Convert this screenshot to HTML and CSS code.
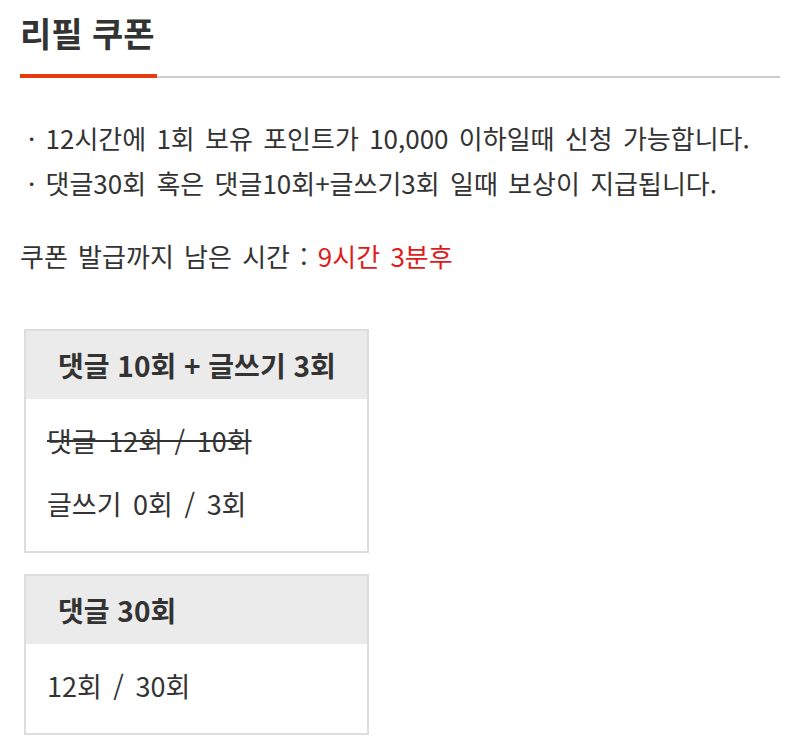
FILE: index.html
```html
<!DOCTYPE html>
<html lang="ko">
<head>
    <meta charset="UTF-8">
    <meta name="viewport" content="width=device-width, initial-scale=1.0">
    <title>리필 쿠폰</title>
    <link rel="stylesheet" href="styles.css">
</head>
<body>
    <div class="page">
        <div class="title-bar">
            <h2 class="title">리필 쿠폰</h2>
        </div>

        <ul class="notice">
            <li>· 12시간에 1회 보유 포인트가 10,000 이하일때 신청 가능합니다.</li>
            <li>· 댓글30회 혹은 댓글10회+글쓰기3회 일때 보상이 지급됩니다.</li>
        </ul>

        <p class="remain">쿠폰 발급까지 남은 시간 : <span class="time">9시간 3분후</span></p>

        <div class="mission">
            <div class="mission-head">댓글 10회 + 글쓰기 3회</div>
            <div class="mission-body">
                <p class="done">댓글 12회 / 10회</p>
                <p>글쓰기 0회 / 3회</p>
            </div>
        </div>

        <div class="mission">
            <div class="mission-head">댓글 30회</div>
            <div class="mission-body">
                <p>12회 / 30회</p>
            </div>
        </div>
    </div>
</body>
</html>
```

FILE: styles.css
```css
body {
    margin: 0;
    padding: 0;
    background: #fff;
    font-family: "Noto Sans CJK KR", "Noto Sans", sans-serif;
    color: #333;
}
.page {
    padding: 0 20px;
}
.title-bar {
    border-bottom: 2px solid #ccc;
}
.title {
    display: inline-block;
    width: 137px;
    margin: 0 0 -2px;
    padding: 12px 0 21px;
    font-size: 34px;
    line-height: 41px;
    font-weight: bold;
    color: #333;
    border-bottom: 4px solid #e63b0f;
}
.notice {
    list-style: none;
    margin: 0;
    padding: 37px 0 0 8px;
}
.notice li {
    font-size: 26px;
    line-height: 45px;
    word-spacing: 3px;
}
.remain {
    margin: 29px 0 0;
    font-size: 26px;
    line-height: 44px;
    word-spacing: 3px;
}
.time {
    color: #e01b1b;
}
.mission {
    width: 341px;
    margin: 51px 0 0 4px;
    border: 2px solid #ddd;
}
.mission + .mission {
    margin-top: 21px;
}
.mission-head {
    padding-left: 32px;
    background: #ebebeb;
    font-size: 28px;
    line-height: 68px;
    font-weight: bold;
}
.mission-body {
    padding: 10px 21px 16px;
}
.mission-body p {
    margin: 0;
    font-size: 27px;
    line-height: 63px;
    word-spacing: 4px;
}
.mission-body p.done {
    text-decoration: line-through;
}
```
